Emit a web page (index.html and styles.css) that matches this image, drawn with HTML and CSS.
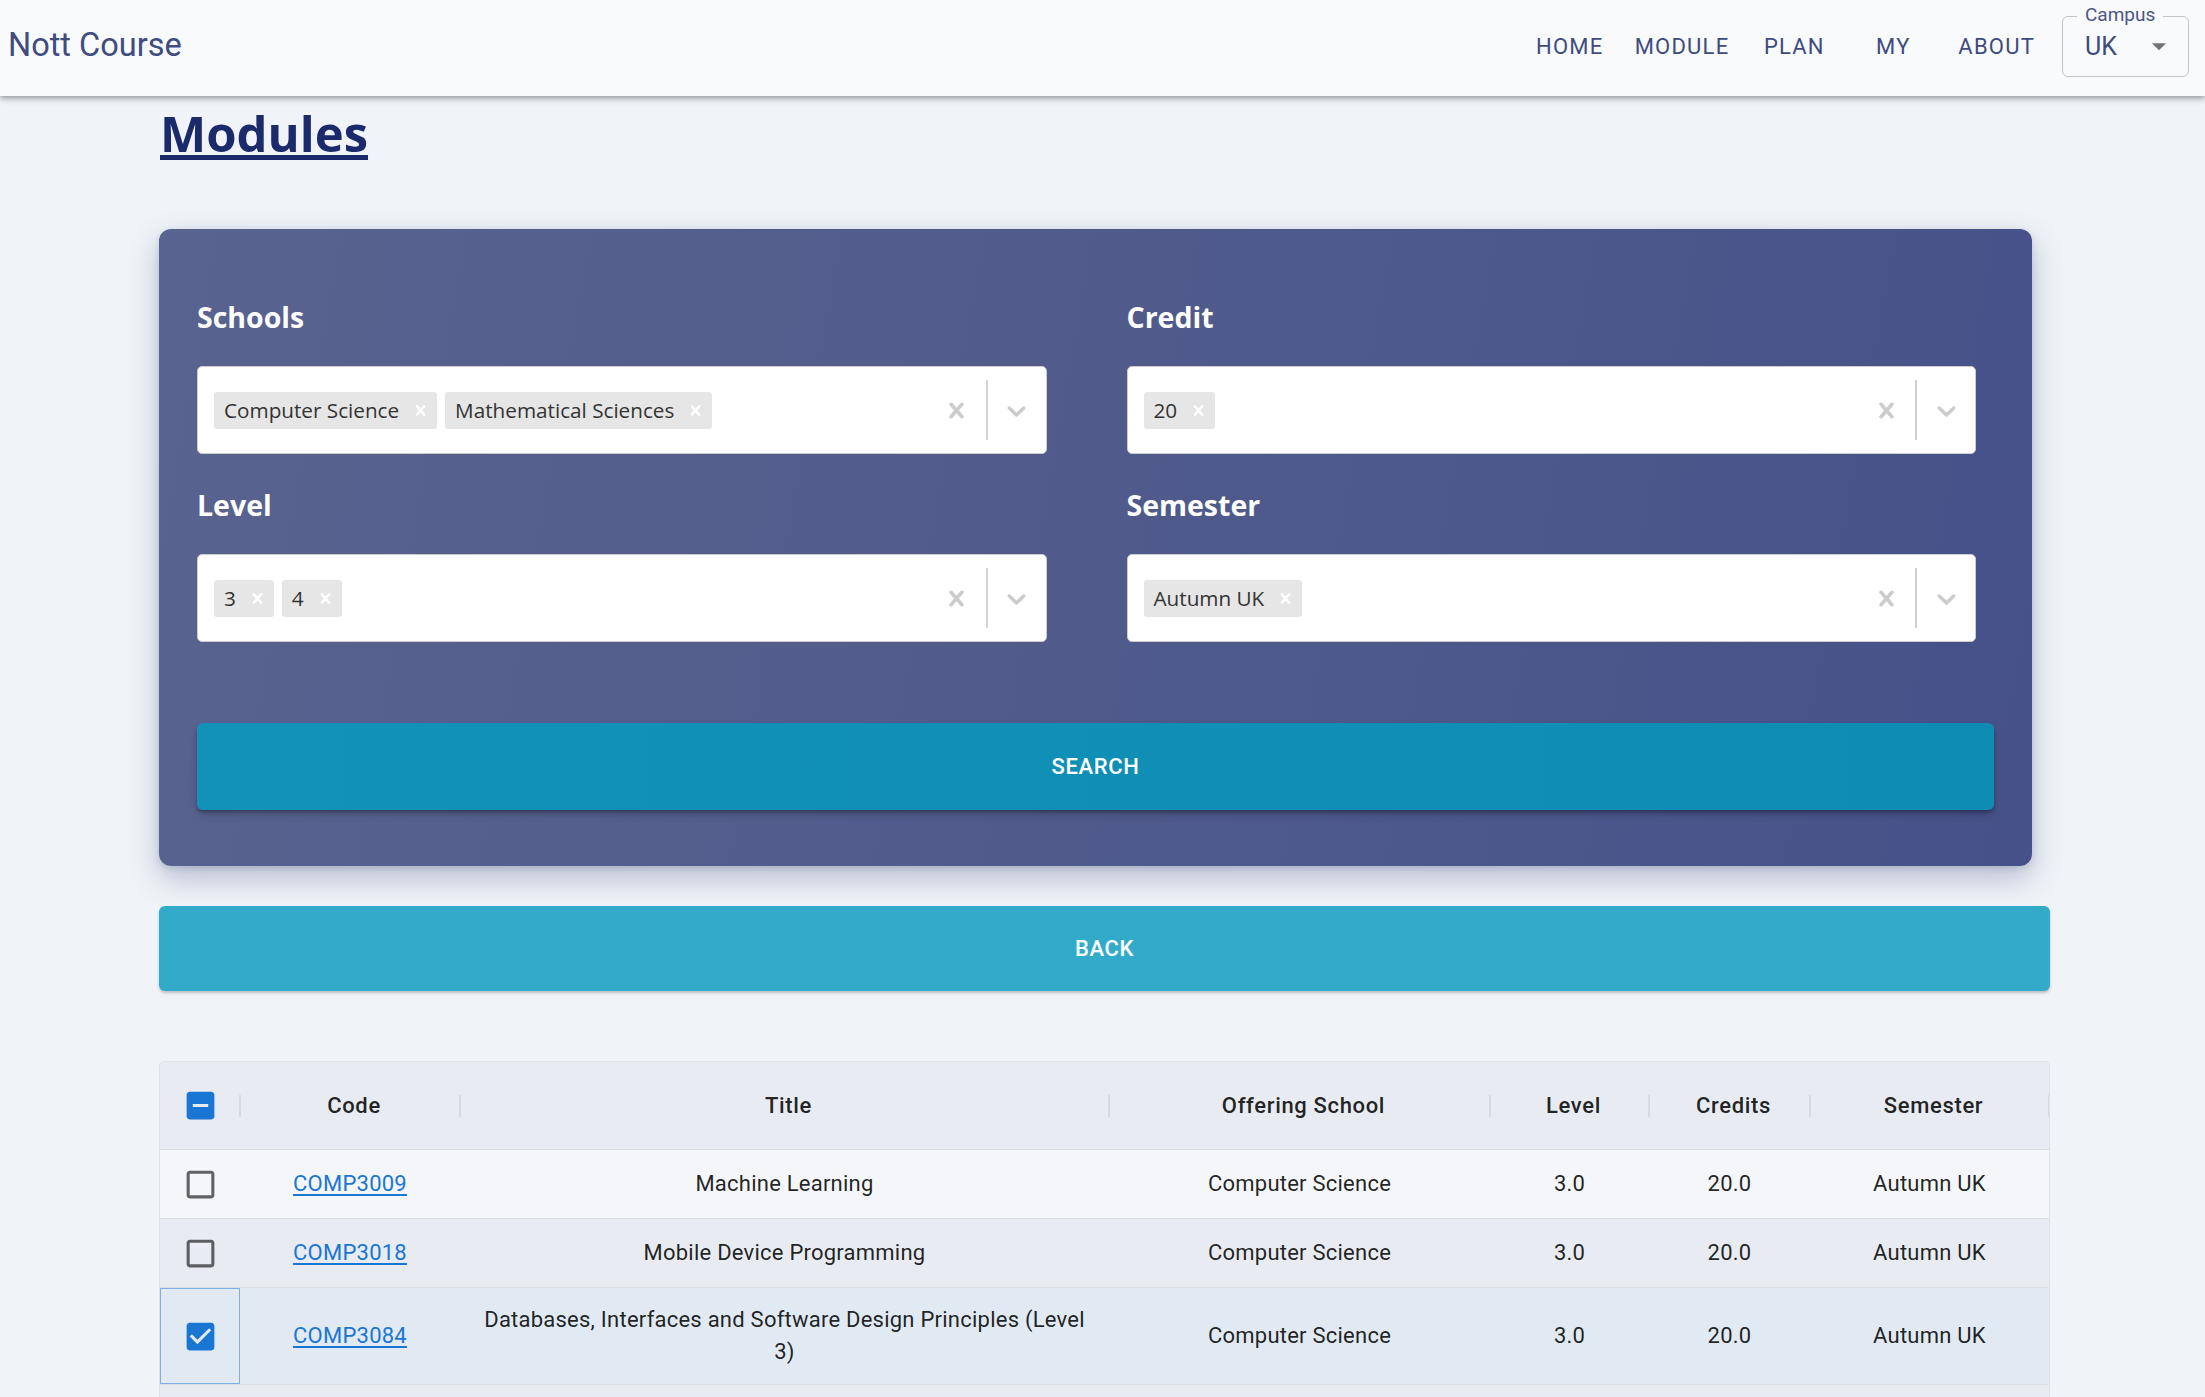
FILE: index.html
```html
<!DOCTYPE html>
<html lang="en">
<head>
<meta charset="utf-8">
<title>Nott Course - Modules</title>
<link rel="stylesheet" href="styles.css">
</head>
<body>
<header class="topbar">
  <div class="brand">Nott Course</div>
  <nav class="nav">
    <a class="nav-btn" href="#">HOME</a>
    <a class="nav-btn" href="#">MODULE</a>
    <a class="nav-btn" href="#">PLAN</a>
    <a class="nav-btn" href="#">MY</a>
    <a class="nav-btn" href="#">ABOUT</a>
  </nav>
  <div class="campus">
    <span class="campus-label">Campus</span>
    <span class="campus-value">UK</span>
    <svg class="campus-arrow" viewBox="0 0 24 24"><path d="M7 10l5 5 5-5z"/></svg>
  </div>
</header>

<main class="page">
  <h1 class="title">Modules</h1>

  <section class="filters">
    <div class="filter-grid">
      <div class="field">
        <label class="field-label">Schools</label>
        <div class="select">
          <div class="values">
            <span class="chip"><span class="chip-label">Computer Science</span><span class="chip-x"><svg viewBox="0 0 20 20"><path d="M14.348 14.849c-0.469 0.469-1.229 0.469-1.697 0l-2.651-3.030-2.651 3.029c-0.469 0.469-1.229 0.469-1.697 0-0.469-0.469-0.469-1.229 0-1.697l2.758-3.150-2.759-3.152c-0.469-0.469-0.469-1.228 0-1.697s1.228-0.469 1.697 0l2.652 3.031 2.651-3.031c0.469-0.469 1.228-0.469 1.697 0s0.469 1.229 0 1.697l-2.758 3.152 2.758 3.150c0.469 0.469 0.469 1.229 0 1.698z"/></svg></span></span>
            <span class="chip"><span class="chip-label">Mathematical Sciences</span><span class="chip-x"><svg viewBox="0 0 20 20"><path d="M14.348 14.849c-0.469 0.469-1.229 0.469-1.697 0l-2.651-3.030-2.651 3.029c-0.469 0.469-1.229 0.469-1.697 0-0.469-0.469-0.469-1.229 0-1.697l2.758-3.150-2.759-3.152c-0.469-0.469-0.469-1.228 0-1.697s1.228-0.469 1.697 0l2.652 3.031 2.651-3.031c0.469-0.469 1.228-0.469 1.697 0s0.469 1.229 0 1.697l-2.758 3.152 2.758 3.150c0.469 0.469 0.469 1.229 0 1.698z"/></svg></span></span>
          </div>
          <div class="indicators">
            <span class="ind"><svg viewBox="0 0 20 20"><path d="M14.348 14.849c-0.469 0.469-1.229 0.469-1.697 0l-2.651-3.030-2.651 3.029c-0.469 0.469-1.229 0.469-1.697 0-0.469-0.469-0.469-1.229 0-1.697l2.758-3.150-2.759-3.152c-0.469-0.469-0.469-1.228 0-1.697s1.228-0.469 1.697 0l2.652 3.031 2.651-3.031c0.469-0.469 1.228-0.469 1.697 0s0.469 1.229 0 1.697l-2.758 3.152 2.758 3.150c0.469 0.469 0.469 1.229 0 1.698z"/></svg></span>
            <span class="sep"></span>
            <span class="ind"><svg viewBox="0 0 20 20"><path d="M4.516 7.548c0.436-0.446 1.043-0.481 1.576 0l3.908 3.747 3.908-3.747c0.533-0.481 1.141-0.446 1.574 0 0.436 0.445 0.408 1.197 0 1.615-0.406 0.418-4.695 4.502-4.695 4.502-0.217 0.223-0.502 0.335-0.787 0.335s-0.57-0.112-0.789-0.335c0 0-4.287-4.084-4.695-4.502s-0.436-1.17 0-1.615z"/></svg></span>
          </div>
        </div>
      </div>

      <div class="field">
        <label class="field-label">Credit</label>
        <div class="select">
          <div class="values">
            <span class="chip"><span class="chip-label">20</span><span class="chip-x"><svg viewBox="0 0 20 20"><path d="M14.348 14.849c-0.469 0.469-1.229 0.469-1.697 0l-2.651-3.030-2.651 3.029c-0.469 0.469-1.229 0.469-1.697 0-0.469-0.469-0.469-1.229 0-1.697l2.758-3.150-2.759-3.152c-0.469-0.469-0.469-1.228 0-1.697s1.228-0.469 1.697 0l2.652 3.031 2.651-3.031c0.469-0.469 1.228-0.469 1.697 0s0.469 1.229 0 1.697l-2.758 3.152 2.758 3.150c0.469 0.469 0.469 1.229 0 1.698z"/></svg></span></span>
          </div>
          <div class="indicators">
            <span class="ind"><svg viewBox="0 0 20 20"><path d="M14.348 14.849c-0.469 0.469-1.229 0.469-1.697 0l-2.651-3.030-2.651 3.029c-0.469 0.469-1.229 0.469-1.697 0-0.469-0.469-0.469-1.229 0-1.697l2.758-3.150-2.759-3.152c-0.469-0.469-0.469-1.228 0-1.697s1.228-0.469 1.697 0l2.652 3.031 2.651-3.031c0.469-0.469 1.228-0.469 1.697 0s0.469 1.229 0 1.697l-2.758 3.152 2.758 3.150c0.469 0.469 0.469 1.229 0 1.698z"/></svg></span>
            <span class="sep"></span>
            <span class="ind"><svg viewBox="0 0 20 20"><path d="M4.516 7.548c0.436-0.446 1.043-0.481 1.576 0l3.908 3.747 3.908-3.747c0.533-0.481 1.141-0.446 1.574 0 0.436 0.445 0.408 1.197 0 1.615-0.406 0.418-4.695 4.502-4.695 4.502-0.217 0.223-0.502 0.335-0.787 0.335s-0.57-0.112-0.789-0.335c0 0-4.287-4.084-4.695-4.502s-0.436-1.17 0-1.615z"/></svg></span>
          </div>
        </div>
      </div>

      <div class="field">
        <label class="field-label">Level</label>
        <div class="select">
          <div class="values">
            <span class="chip"><span class="chip-label">3</span><span class="chip-x"><svg viewBox="0 0 20 20"><path d="M14.348 14.849c-0.469 0.469-1.229 0.469-1.697 0l-2.651-3.030-2.651 3.029c-0.469 0.469-1.229 0.469-1.697 0-0.469-0.469-0.469-1.229 0-1.697l2.758-3.150-2.759-3.152c-0.469-0.469-0.469-1.228 0-1.697s1.228-0.469 1.697 0l2.652 3.031 2.651-3.031c0.469-0.469 1.228-0.469 1.697 0s0.469 1.229 0 1.697l-2.758 3.152 2.758 3.150c0.469 0.469 0.469 1.229 0 1.698z"/></svg></span></span>
            <span class="chip"><span class="chip-label">4</span><span class="chip-x"><svg viewBox="0 0 20 20"><path d="M14.348 14.849c-0.469 0.469-1.229 0.469-1.697 0l-2.651-3.030-2.651 3.029c-0.469 0.469-1.229 0.469-1.697 0-0.469-0.469-0.469-1.229 0-1.697l2.758-3.150-2.759-3.152c-0.469-0.469-0.469-1.228 0-1.697s1.228-0.469 1.697 0l2.652 3.031 2.651-3.031c0.469-0.469 1.228-0.469 1.697 0s0.469 1.229 0 1.697l-2.758 3.152 2.758 3.150c0.469 0.469 0.469 1.229 0 1.698z"/></svg></span></span>
          </div>
          <div class="indicators">
            <span class="ind"><svg viewBox="0 0 20 20"><path d="M14.348 14.849c-0.469 0.469-1.229 0.469-1.697 0l-2.651-3.030-2.651 3.029c-0.469 0.469-1.229 0.469-1.697 0-0.469-0.469-0.469-1.229 0-1.697l2.758-3.150-2.759-3.152c-0.469-0.469-0.469-1.228 0-1.697s1.228-0.469 1.697 0l2.652 3.031 2.651-3.031c0.469-0.469 1.228-0.469 1.697 0s0.469 1.229 0 1.697l-2.758 3.152 2.758 3.150c0.469 0.469 0.469 1.229 0 1.698z"/></svg></span>
            <span class="sep"></span>
            <span class="ind"><svg viewBox="0 0 20 20"><path d="M4.516 7.548c0.436-0.446 1.043-0.481 1.576 0l3.908 3.747 3.908-3.747c0.533-0.481 1.141-0.446 1.574 0 0.436 0.445 0.408 1.197 0 1.615-0.406 0.418-4.695 4.502-4.695 4.502-0.217 0.223-0.502 0.335-0.787 0.335s-0.57-0.112-0.789-0.335c0 0-4.287-4.084-4.695-4.502s-0.436-1.17 0-1.615z"/></svg></span>
          </div>
        </div>
      </div>

      <div class="field">
        <label class="field-label">Semester</label>
        <div class="select">
          <div class="values">
            <span class="chip"><span class="chip-label">Autumn UK</span><span class="chip-x"><svg viewBox="0 0 20 20"><path d="M14.348 14.849c-0.469 0.469-1.229 0.469-1.697 0l-2.651-3.030-2.651 3.029c-0.469 0.469-1.229 0.469-1.697 0-0.469-0.469-0.469-1.229 0-1.697l2.758-3.150-2.759-3.152c-0.469-0.469-0.469-1.228 0-1.697s1.228-0.469 1.697 0l2.652 3.031 2.651-3.031c0.469-0.469 1.228-0.469 1.697 0s0.469 1.229 0 1.697l-2.758 3.152 2.758 3.150c0.469 0.469 0.469 1.229 0 1.698z"/></svg></span></span>
          </div>
          <div class="indicators">
            <span class="ind"><svg viewBox="0 0 20 20"><path d="M14.348 14.849c-0.469 0.469-1.229 0.469-1.697 0l-2.651-3.030-2.651 3.029c-0.469 0.469-1.229 0.469-1.697 0-0.469-0.469-0.469-1.229 0-1.697l2.758-3.150-2.759-3.152c-0.469-0.469-0.469-1.228 0-1.697s1.228-0.469 1.697 0l2.652 3.031 2.651-3.031c0.469-0.469 1.228-0.469 1.697 0s0.469 1.229 0 1.697l-2.758 3.152 2.758 3.150c0.469 0.469 0.469 1.229 0 1.698z"/></svg></span>
            <span class="sep"></span>
            <span class="ind"><svg viewBox="0 0 20 20"><path d="M4.516 7.548c0.436-0.446 1.043-0.481 1.576 0l3.908 3.747 3.908-3.747c0.533-0.481 1.141-0.446 1.574 0 0.436 0.445 0.408 1.197 0 1.615-0.406 0.418-4.695 4.502-4.695 4.502-0.217 0.223-0.502 0.335-0.787 0.335s-0.57-0.112-0.789-0.335c0 0-4.287-4.084-4.695-4.502s-0.436-1.17 0-1.615z"/></svg></span>
          </div>
        </div>
      </div>
    </div>

    <button class="search-btn" type="button">SEARCH</button>
  </section>

  <button class="back-btn" type="button">BACK</button>

  <div class="dg" role="grid">
    <div class="dg-head" role="row">
      <div class="dg-hcell dg-hcell-cb"><svg class="cb cb-on" viewBox="0 0 24 24"><path d="M19 3H5c-1.1 0-2 .9-2 2v14c0 1.1.9 2 2 2h14c1.1 0 2-.9 2-2V5c0-1.1-.9-2-2-2zm-2 10H7v-2h10v2z"/></svg></div>
      <div class="dg-hcell">Code</div>
      <div class="dg-hcell">Title</div>
      <div class="dg-hcell">Offering School</div>
      <div class="dg-hcell">Level</div>
      <div class="dg-hcell">Credits</div>
      <div class="dg-hcell">Semester</div>
    </div>

    <div class="dg-row dg-row-odd" role="row">
      <div class="dg-cell dg-cell-cb"><svg class="cb cb-off" viewBox="0 0 24 24"><path d="M19 5v14H5V5h14m0-2H5c-1.1 0-2 .9-2 2v14c0 1.1.9 2 2 2h14c1.1 0 2-.9 2-2V5c0-1.1-.9-2-2-2z"/></svg></div>
      <div class="dg-cell"><a class="code-link" href="#">COMP3009</a></div>
      <div class="dg-cell">Machine Learning</div>
      <div class="dg-cell">Computer Science</div>
      <div class="dg-cell">3.0</div>
      <div class="dg-cell">20.0</div>
      <div class="dg-cell">Autumn UK</div>
    </div>

    <div class="dg-row dg-row-even" role="row">
      <div class="dg-cell dg-cell-cb"><svg class="cb cb-off" viewBox="0 0 24 24"><path d="M19 5v14H5V5h14m0-2H5c-1.1 0-2 .9-2 2v14c0 1.1.9 2 2 2h14c1.1 0 2-.9 2-2V5c0-1.1-.9-2-2-2z"/></svg></div>
      <div class="dg-cell"><a class="code-link" href="#">COMP3018</a></div>
      <div class="dg-cell">Mobile Device Programming</div>
      <div class="dg-cell">Computer Science</div>
      <div class="dg-cell">3.0</div>
      <div class="dg-cell">20.0</div>
      <div class="dg-cell">Autumn UK</div>
    </div>

    <div class="dg-row dg-row-selected" role="row">
      <div class="dg-cell dg-cell-cb dg-cell-focus"><svg class="cb cb-on" viewBox="0 0 24 24"><path d="M19 3H5c-1.11 0-2 .9-2 2v14c0 1.1.89 2 2 2h14c1.11 0 2-.9 2-2V5c0-1.1-.89-2-2-2zm-9 14l-5-5 1.41-1.41L10 14.17l7.59-7.59L19 8l-9 9z"/></svg></div>
      <div class="dg-cell"><a class="code-link" href="#">COMP3084</a></div>
      <div class="dg-cell">Databases, Interfaces and Software Design Principles (Level 3)</div>
      <div class="dg-cell">Computer Science</div>
      <div class="dg-cell">3.0</div>
      <div class="dg-cell">20.0</div>
      <div class="dg-cell">Autumn UK</div>
    </div>

    <div class="dg-row dg-row-even" role="row"></div>
  </div>
</main>
</body>
</html>
```

FILE: styles.css
```css
html, body {
  margin: 0;
  padding: 0;
}

body {
  background: #f0f4f8;
  font-family: Roboto, "Liberation Sans", Arial, sans-serif;
  color: rgba(0, 0, 0, 0.87);
}

/* ---------- Top bar ---------- */
.topbar {
  position: relative;
  z-index: 2;
  height: 96px;
  box-sizing: border-box;
  display: flex;
  align-items: center;
  padding: 0 16px 0 8px;
  background: #f9fafc;
  box-shadow: 0 2px 4px -1px rgba(0, 0, 0, 0.2), 0 4px 5px 0 rgba(0, 0, 0, 0.14), 0 1px 10px 0 rgba(0, 0, 0, 0.12);
}

.brand {
  font-family: Roboto, sans-serif;
  font-size: 32.5px;
  font-weight: 400;
  color: #404b80;
  margin-bottom: 6px;
}

.nav {
  margin-left: auto;
  margin-right: 16px;
  display: flex;
  gap: 9px;
  margin-bottom: 4px;
}

.nav-btn {
  box-sizing: border-box;
  min-width: 90px;
  height: 50px;
  padding: 0 11px;
  display: flex;
  align-items: center;
  justify-content: center;
  font-family: Roboto, sans-serif;
  font-size: 22px;
  font-weight: 400;
  letter-spacing: 0.055em;
  color: #3f4b80;
  text-decoration: none;
}

.campus {
  position: relative;
  box-sizing: border-box;
  width: 127px;
  height: 61px;
  border: 1px solid #c4c4c4;
  border-radius: 6px;
  display: flex;
  align-items: center;
  padding-left: 22px;
  margin-bottom: 4px;
}

.campus-label {
  position: absolute;
  top: -13px;
  left: 14px;
  padding: 0 8px;
  line-height: 22px;
  font-size: 19px;
  color: #4b5587;
  background: #f9fafc;
}

.campus-value {
  font-size: 25px;
  color: #3f4b80;
}

.campus-arrow {
  width: 34px;
  height: 34px;
  margin-left: auto;
  margin-right: 12px;
  fill: rgba(0, 0, 0, 0.54);
}

/* ---------- Page ---------- */
.page {
  width: 1891px;
  margin-left: 159px;
  padding-bottom: 40px;
}

.title {
  margin: 3px 0 0 1px;
  font-family: "Open Sans", "Noto Sans", sans-serif;
  font-size: 49px;
  font-weight: 700;
  line-height: 68px;
  color: #1b2a6b;
  text-decoration: underline;
  text-decoration-thickness: 5px;
  text-underline-offset: 3px;
}

/* ---------- Filters card ---------- */
.filters {
  margin-top: 62px;
  width: 1873px;
  box-sizing: border-box;
  padding: 69px 38px 56px;
  border-radius: 12px;
  background: linear-gradient(100deg, #59638f 0%, #505b8c 50%, #46518a 100%);
  box-shadow: 0 12px 30px rgba(56, 66, 118, 0.32), 0 2px 6px rgba(56, 66, 118, 0.15);
}

.filter-grid {
  display: grid;
  grid-template-columns: 1fr 1fr;
  column-gap: 80px;
  row-gap: 32px;
  margin-right: 18px;
}

.field-label {
  display: block;
  font-family: "Open Sans", "Noto Sans", sans-serif;
  font-size: 28.5px;
  font-weight: 700;
  line-height: 38px;
  color: #ffffff;
  margin-bottom: 30px;
}

.select {
  box-sizing: border-box;
  height: 88px;
  background: #ffffff;
  border: 1px solid #cccccc;
  border-radius: 5px;
  display: flex;
  align-items: center;
}

.values {
  flex: 1;
  display: flex;
  align-items: center;
  gap: 8px;
  padding-left: 16px;
}

.chip {
  display: flex;
  align-items: center;
  height: 37px;
  background: #e6e6e6;
  border-radius: 3px;
}

.chip-label {
  padding: 0 5px 0 10px;
  font-family: "Open Sans", "Noto Sans", sans-serif;
  font-size: 20.7px;
  color: #333333;
}

.chip-x {
  width: 33px;
  display: flex;
  justify-content: center;
  align-items: center;
}

.chip-x svg {
  width: 21px;
  height: 21px;
  fill: #ffffff;
}

.indicators {
  align-self: stretch;
  display: flex;
  align-items: center;
}

.ind {
  width: 58px;
  display: flex;
  justify-content: center;
  align-items: center;
}

.ind svg {
  width: 31px;
  height: 31px;
  fill: #cccccc;
}

.sep {
  align-self: stretch;
  width: 2px;
  margin: 13px 0;
  background: #d2d2d2;
}

/* ---------- Buttons ---------- */
.search-btn,
.back-btn {
  display: block;
  width: 100%;
  border: 0;
  color: #ffffff;
  font-family: Roboto, sans-serif;
  font-size: 22px;
  font-weight: 500;
  letter-spacing: 0.02857em;
  cursor: pointer;
}

.search-btn {
  margin-top: 81px;
  height: 87px;
  border-radius: 6px;
  background: linear-gradient(90deg, #1292b8 0%, #0f8cb3 100%);
  box-shadow: 0 3px 4px -1px rgba(0, 0, 0, 0.35), 0 5px 8px rgba(0, 0, 0, 0.12);
}

.back-btn {
  margin-top: 40px;
  height: 85px;
  border-radius: 6px;
  background: #31abc9;
  box-shadow: 0 2px 3px rgba(0, 0, 0, 0.22);
}

/* ---------- Data grid ---------- */
.dg {
  margin-top: 70px;
  border: 1px solid #dde2e8;
  border-radius: 5px;
  overflow: hidden;
  background: #e8ecf2;
}

.dg-head,
.dg-row {
  display: grid;
  grid-template-columns: 80px 220px 649px 381px 159px 161px 1fr;
}

.dg-head {
  height: 88px;
  box-sizing: border-box;
  background: #e8ecf2;
  border-bottom: 1px solid #d9dee4;
}

.dg-hcell {
  position: relative;
  display: flex;
  align-items: center;
  justify-content: center;
  padding-left: 8px;
  font-size: 22px;
  font-weight: 500;
  letter-spacing: 0.03em;
  color: rgba(0, 0, 0, 0.87);
}

.dg-hcell::after {
  content: "";
  position: absolute;
  right: -1px;
  top: 50%;
  width: 2px;
  height: 22px;
  margin-top: -11px;
  background: #d6dbe2;
}

.dg-hcell-cb {
  padding-left: 0;
}

.dg-row {
  min-height: 68px;
  border-bottom: 1px solid #dde1e6;
}

.dg-row-odd { background: #f4f6f9; }
.dg-row-even { background: #e8ecf2; }
.dg-row-selected { background: #e1eaf3; }

.dg-cell {
  display: flex;
  align-items: center;
  justify-content: center;
  text-align: center;
  padding: 16px 14px;
  font-size: 22px;
  line-height: 32px;
  letter-spacing: 0.01071em;
  color: rgba(0, 0, 0, 0.87);
}

.dg-cell-cb {
  padding: 0;
}

.dg-cell-focus {
  outline: 1px solid rgba(25, 118, 210, 0.5);
  outline-offset: -1px;
}

.cb {
  width: 37px;
  height: 37px;
}

.cb-on { fill: #1976d2; }
.cb-off { fill: rgba(0, 0, 0, 0.6); }

.code-link {
  color: #1976d2;
  text-decoration: underline;
  text-decoration-thickness: 2px;
  text-underline-offset: 3px;
}
```
